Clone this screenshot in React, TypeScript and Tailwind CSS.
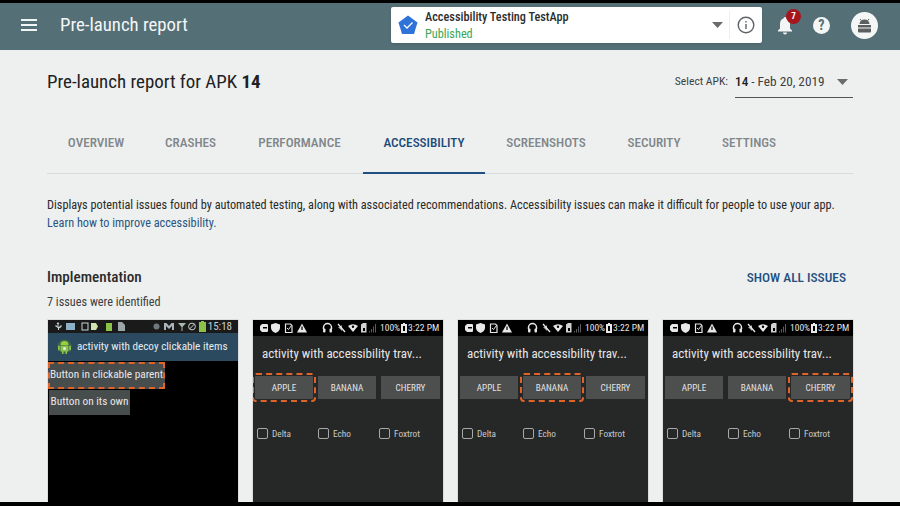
import React from "react";

const Tab = ({ label, active, w }: { label: string; active?: boolean; w: string }) => (
  <div className={`flex h-[60px] items-center justify-center border-b-2 text-[13.2px] font-medium ${w} ${active ? "border-[#1f5080] text-[#1c4a78]" : "border-transparent text-[#80868a]"}`}>
    {label}
  </div>
);

const Arrow = ({ className }: { className: string }) => (
  <svg width="11" height="6" viewBox="0 0 11 6" className={className}><path d="M0 0h11L5.500 6z" fill="#6b6b6b" /></svg>
);

const Dark = () => (
  <div className="flex h-[16px] items-center bg-black text-white">
    <svg width="127" height="16" viewBox="0 0 127 16" className="shrink-0" fill="#e8e8e8">
      <path d="M9 4h5a1 1 0 0 1 1 1v6a1 1 0 0 1-1 1H9L7 10V6z" />
      <rect x="10" y="7" width="4" height="1.500" fill="#000" />
      <path d="M22.500 3 L27 4.500 V8 C27 10.500 24.500 12.300 22.500 13 C20.500 12.300 18 10.500 18 8 V4.500z" />
      <path d="M32.500 4h5l1.500 1.500V12.500h-6.500z" fill="none" stroke="#e8e8e8" strokeWidth="1.200" />
      <path d="M34 8l1.500 1.500 3-4" fill="none" stroke="#e8e8e8" />
      <path d="M49 3.500 L54 12.500 H44z" />
      <rect x="48.400" y="6.500" width="1.200" height="3.500" fill="#000" />
      <path d="M70.500 9V7.500a4 4 0 0 1 8 0V9" fill="none" stroke="#e8e8e8" strokeWidth="1.500" />
      <rect x="70" y="8.500" width="2.500" height="4" rx="1" /><rect x="76.500" y="8.500" width="2.500" height="4" rx="1" />
      <path d="M85 4 L92 12" stroke="#e8e8e8" strokeWidth="1.300" />
      <path d="M85 7h2l2-2v6z" fillOpacity=".75" />
      <path d="M95 6 Q100 2.500 105 6 L100 12z" />
      <circle cx="100" cy="6.700" r="1.200" fill="#000" />
      <path d="M108 4.500l2-1.500h3.500v9.500H108z" fillOpacity=".9" />
      <rect x="110" y="8" width="2" height="3" fill="#000" />
      <path d="M116 11h1v1.500h-1zM118 9h1v3.500h-1zM120 6.500h1v6h-1zM122 4h1v8.500h-1z" fillOpacity=".4" />
    </svg>
    <span className="text-[9.5px] leading-none whitespace-nowrap text-[#e6e6e6]">100%</span>
    <svg width="6" height="10" viewBox="0 0 6 10" className="ml-[1px] shrink-0"><path d="M2 0h2v1h2v9H0V1h2z" fill="#e8e8e8" /><rect x="2" y="3" width="2" height="5" fill="#000" /></svg>
    <span className="ml-[1px] text-[9.6px] leading-none whitespace-nowrap text-[#e6e6e6]">3:22 PM</span>
  </div>
);

const ABtn = ({ label, on, w }: { label: string; on?: boolean; w: string }) => (
  <div className={`flex h-[23px] ${w} items-center justify-center bg-[#4d4e4e] text-[9.2px] text-[#e2e2e2] ${on ? "rounded-[1px] outline-2 outline-dashed outline-[#e0642a] outline-offset-[1px]" : ""}`}>
    {label}
  </div>
);

const Check = ({ label }: { label: string }) => (
  <div className="flex w-[61px] items-center gap-[4px]">
    <div className="size-[11px] rounded-[2px] border border-[#a8a8a8]" />
    <span className="text-[9.3px] text-[#c9c9c9]">{label}</span>
  </div>
);

const Phone = ({ on }: { on: number }) => (
  <div className="h-[183px] w-[190px] shrink-0 overflow-hidden bg-[#262727] shadow-[0_0_0_1px_#ddd]">
    <Dark />
    <div className="mt-[9px] ml-[9px] text-[13px] leading-[18px] whitespace-nowrap text-[#e6e6e6]">activity with accessibility trav...</div>
    <div className="mt-[13px] ml-[2px] flex gap-[5px]">
      <ABtn label="APPLE" on={on === 0} w="w-[58px]" />
      <ABtn label="BANANA" on={on === 1} w="w-[58px]" />
      <ABtn label="CHERRY" on={on === 2} w="w-[59px]" />
    </div>
    <div className="mt-[28px] ml-[4px] flex">
      <Check label="Delta" />
      <Check label="Echo" />
      <Check label="Foxtrot" />
    </div>
  </div>
);

export default function App() {
  return (
    <div className="flex h-[506px] w-[900px] flex-col overflow-hidden bg-black pt-[3px] font-['Roboto',sans-serif] font-stretch-[87%]">
      <header className="flex h-[47px] shrink-0 items-center bg-[#546f76] pb-[3px] text-white">
        <svg width="16" height="12" viewBox="0 0 16 12" className="ml-[21px] shrink-0" fill="#f2f5f5">
          <rect width="16" height="2" /><rect y="5" width="16" height="2" /><rect y="10" width="16" height="2" />
        </svg>
        <div className="ml-[23px] w-[128px] shrink-0 whitespace-nowrap text-[18.8px] text-[#f4f6f6]">Pre-launch report</div>
        <div className="ml-[203px] flex h-[36px] w-[371px] shrink-0 items-center rounded-[2px] bg-white pl-[7px] shadow">
          <svg width="20" height="20" viewBox="0 0 20 20" className="shrink-0">
            <path d="M10 0.500 L19.500 7.500 L16 19 H4 L0.500 7.500z" fill="#2f73d9" strokeLinejoin="round" />
            <path d="M6 10 L9 13 L14.500 7.500" fill="none" stroke="#fff" strokeWidth="1.300" />
          </svg>
          <div className="ml-[7px] flex w-[145px] shrink-0 flex-col whitespace-nowrap text-[12.25px] leading-[16px]">
            <span className="font-medium text-[#2c2c2c]">Accessibility Testing TestApp</span>
            <span className="mt-[1px] text-[#3aa655]">Published</span>
          </div>
          <Arrow className="ml-[142px] shrink-0" />
          <div className="ml-[6px] h-[28px] w-px shrink-0 bg-[#eeeeee]" />
          <svg width="18" height="18" viewBox="0 0 18 18" className="ml-[7px] shrink-0" fill="none" stroke="#5f6368" strokeWidth="1.400">
            <circle cx="9" cy="9" r="7.800" />
            <path d="M9 8v5" /><path d="M9 5v1.500" />
          </svg>
        </div>
        <div className="relative ml-[15px] size-[16px] shrink-0">
          <svg width="16" height="18" viewBox="0 0 16 18" fill="#f4f6f6">
            <path d="M8 0a1.500 1.500 0 0 1 1.500 1.500C12 2.300 13 4.500 13 7v4.500l2 2V14.500H1V13.500l2-2V7c0-2.500 1-4.700 3.500-5.500A1.500 1.500 0 0 1 8 0z" />
            <path d="M6 15.500h4a2 2 0 0 1-4 0z" />
          </svg>
          <div className="absolute -top-[8px] left-[9px] flex size-[15px] items-center justify-center rounded-full bg-[#a5161d] text-[9px] font-bold text-white">7</div>
        </div>
        <div className="ml-[20px] flex size-[17px] shrink-0 items-center justify-center rounded-full bg-[#f4f6f6] text-[14px] font-bold text-[#546f76]">?</div>
        <div className="ml-[21px] flex size-[27px] shrink-0 items-center justify-center rounded-full bg-[#f5f7f7]">
          <svg width="15" height="15" viewBox="0 0 15 15" fill="#5c5f60">
            <path d="M3 1l1.200 1.600M12 1l-1.200 1.600" stroke="#5c5f60" />
            <path d="M2.500 6a5 4.500 0 0 1 10 0z" />
            <rect x="1" y="7" width="13" height="2.500" />
            <path d="M1 10.500h13v3a1 1 0 0 1-1 1H2a1 1 0 0 1-1-1z" />
          </svg>
        </div>
      </header>
      <main className="flex h-[452px] shrink-0 flex-col overflow-hidden bg-[#eef0ef] px-[47px] text-[#222]">
        <div className="mt-[17px] flex h-[30px] items-center">
          <h1 className="text-[18.9px] font-normal text-[#202124]">Pre-launch report for APK <b className="font-bold">14</b></h1>
          <span className="ml-auto text-[11.6px] text-[#3c4043]">Select APK:</span>
          <div className="ml-[7px] flex h-[31px] w-[118px] shrink-0 items-center border-b border-[#555] text-[13.25px] text-[#3c4043]">
            <span><b className="font-medium text-[#222]">14</b> - Feb 20, 2019</span>
            <Arrow className="mr-[5px] ml-auto" />
          </div>
        </div>
        <nav className="mt-[17px] flex h-[60px] border-b border-[#d8dbdb]">
          <Tab label="OVERVIEW" w="w-[98px]" />
          <Tab label="CRASHES" w="w-[91px]" />
          <Tab label="PERFORMANCE" w="w-[127px]" />
          <Tab label="ACCESSIBILITY" active w="w-[122px]" />
          <Tab label="SCREENSHOTS" w="w-[122px]" />
          <Tab label="SECURITY" w="w-[94px]" />
          <Tab label="SETTINGS" w="w-[96px]" />
        </nav>
        <p className="mt-[22px] text-[12.25px] leading-[18px] text-[#2a2a2a]">
          Displays potential issues found by automated testing, along with associated recommendations. Accessibility issues can make it difficult for people to use your app.
          <br />
          <a className="text-[#2a5583]">Learn how to improve accessibility.</a>
        </p>
        <div className="mt-[35px] flex h-[20px] items-center justify-between">
          <h2 className="text-[15.2px] font-medium text-[#2a2a2a]">Implementation</h2>
          <span className="mt-[2px] mr-[7px] text-[13.4px] font-medium text-[#1f4f7f]">SHOW ALL ISSUES</span>
        </div>
        <p className="mt-[7px] text-[12.25px] leading-[16px] text-[#3c4043]">7 issues were identified</p>
        <div className="mt-[10px] ml-[1px] flex gap-[15px]">
          <div className="h-[183px] w-[190px] shrink-0 overflow-hidden bg-black shadow-[0_0_0_1px_#ddd]">
            <div className="flex h-[13px] items-center bg-[#1a1a1a] pr-[6px] pl-[7px]">
              <svg width="72" height="9" viewBox="0 0 72 9" className="shrink-0" fill="#c8d4d8">
                <path d="M3 0l1.500 2H3.500v3l2-1V3h1v2l-2.500 1.500V8h-1V6L0.500 4.500V3h1v1l1 .5V2H1.500z" />
                <rect x="11" y="1" width="9" height="7" fill="#8cb0c8" />
                <rect x="27" y="1" width="6" height="7" fill="none" stroke="#c8d4d8" />
                <path d="M36 1h5l2 3.500-2 3.500h-5z" fill="#cfe3b0" />
                <rect x="51" y="1" width="6" height="8" fill="#8bc34a" />
                <path d="M63 0h4l3 3v6h-7z" fillOpacity=".75" />
              </svg>
              <div className="ml-auto flex items-center text-[#b8c4c8]">
                <svg width="7" height="7" viewBox="0 0 7 7" fill="#6f7a7c"><circle cx="3.500" cy="3.500" r="3" /></svg>
                <svg width="10" height="9" viewBox="0 0 10 9" className="ml-[4px]" fill="#aab4b8"><path d="M0 1h2.500l2.500 3 2.500-3H10v7H8V4L5 7 2 4v4H0z" /></svg>
                <svg width="8" height="9" viewBox="0 0 8 9" className="ml-[4px]" fill="#a9b8ac"><path d="M0 1h8L4.500 5v4h-1V5z" /></svg>
                <svg width="8" height="9" viewBox="0 0 8 9" className="ml-[2px]" fill="none" stroke="#c8d0d0"><circle cx="4" cy="4.500" r="3.400" /><path d="M1.800 6.800l4.500-4.600" /></svg>
                <svg width="7" height="11" viewBox="0 0 7 11" className="ml-[3px]"><path d="M2 0h3v1h2v10H0V1h2z" fill="#8bc34a" /></svg>
                <span className="ml-[2px] text-[11px] leading-none text-[#c6d0d4]">15:18</span>
              </div>
            </div>
            <div className="flex h-[28px] items-center bg-[#2b4a5f] pl-[9px]">
              <svg width="15" height="17" viewBox="0 0 15 17" className="shrink-0">
                <circle cx="7.500" cy="7.500" r="7" fill="#5aa02c" opacity=".35" />
                <path d="M3.500 6a4 4 0 0 1 8 0z" fill="#9ccc3c" />
                <rect x="3.500" y="6.500" width="8" height="6" rx="1" fill="#8bc34a" />
                <rect x="5" y="12" width="1.500" height="3" fill="#8bc34a" /><rect x="8.500" y="12" width="1.500" height="3" fill="#8bc34a" />
                <rect x="1" y="6.500" width="1.800" height="5" rx=".9" fill="#8bc34a" /><rect x="12.200" y="6.500" width="1.800" height="5" rx=".9" fill="#8bc34a" />
                <circle cx="7.500" cy="9.500" r="1.500" fill="#dfeee0" />
              </svg>
              <span className="ml-[5px] text-[11.2px] whitespace-nowrap text-[#e4ecee]">activity with decoy clickable items</span>
            </div>
            <div className="mt-[1px] flex h-[27px] w-[117px] items-center justify-center bg-[#474c4c] text-[11.3px] whitespace-nowrap text-[#e8e8e8] outline-2 outline-dashed outline-[#e0642a] outline-offset-[-2px]">Button in clickable parent</div>
            <div className="mt-[1px] ml-[1px] flex h-[25px] w-[81px] items-center justify-center bg-[#474c4c] text-[11.3px] whitespace-nowrap text-[#e8e8e8]">Button on its own</div>
          </div>
          <Phone on={0} />
          <Phone on={1} />
          <Phone on={2} />
        </div>
      </main>
    </div>
  );
}
